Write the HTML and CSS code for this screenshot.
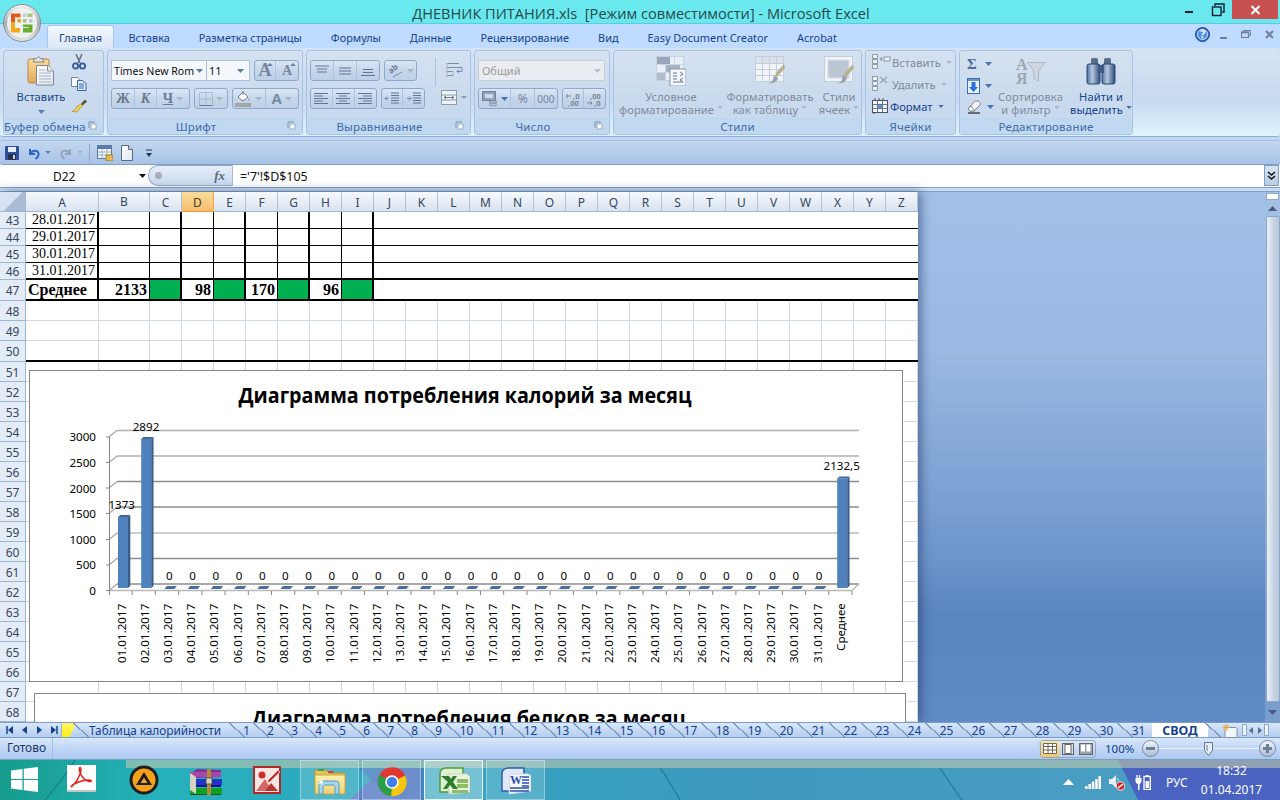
FILE: index.html
```html
<!DOCTYPE html>
<html lang="ru">
<head>
<meta charset="utf-8">
<title>ДНЕВНИК ПИТАНИЯ.xls - Microsoft Excel</title>
<link rel="stylesheet" href="styles.css">
</head>
<body>
<svg class="defs" width="0" height="0">
  <defs>
    <linearGradient id="orbRim" x1="0" y1="0" x2="0" y2="1"><stop offset="0" stop-color="#f4f4f4"/><stop offset=".5" stop-color="#a9aeb3"/><stop offset="1" stop-color="#e6e6e6"/></linearGradient>
    <linearGradient id="docFill" x1="0" y1="0" x2="1" y2="1"><stop offset="0" stop-color="#fff"/><stop offset="1" stop-color="#dfe6ee"/></linearGradient>
    <linearGradient id="clipFill" x1="0" y1="0" x2="0" y2="1"><stop offset="0" stop-color="#fbdc9c"/><stop offset="1" stop-color="#e3a95a"/></linearGradient>
    <linearGradient id="binFill" x1="0" y1="0" x2="1" y2="0"><stop offset="0" stop-color="#4e6f9d"/><stop offset=".4" stop-color="#b6c8de"/><stop offset="1" stop-color="#2d4d7c"/></linearGradient>
    <linearGradient id="folderFill" x1="0" y1="0" x2="0" y2="1"><stop offset="0" stop-color="#fff2b0"/><stop offset="1" stop-color="#f0cf70"/></linearGradient>
    <symbol id="z" viewBox="0 0 13 3" width="13" height="3"><polygon points="0,3 10,3 12.5,0 2.5,0" fill="#4a6e9e"/></symbol>
    <symbol id="caret" viewBox="0 0 7 4"><polygon points="0,0 7,0 3.5,4" fill="currentColor"/></symbol>
    <symbol id="launch" viewBox="0 0 9 9"><path d="M1 1h6M1 1v6" stroke="#7d93ad" fill="none"/><rect x="3" y="3" width="5" height="5" fill="#fff" stroke="#9aaabd"/></symbol>
    <symbol id="al-top" viewBox="0 0 16 12"><path d="M1 1.500h14M3 4.500h10M3 7.500h10" stroke="#5f7793" stroke-width="1.2"/></symbol>
    <symbol id="al-mid" viewBox="0 0 16 12"><path d="M2 3.500h12M2 6.500h12M2 9.500h12" stroke="#5f7793" stroke-width="1.2"/></symbol>
    <symbol id="al-bot" viewBox="0 0 16 12"><path d="M3 5h10M3 8h10M1 11h14" stroke="#5f7793" stroke-width="1.2"/></symbol>
    <symbol id="al-l" viewBox="0 0 16 12"><path d="M1 1h14M1 3.500h9M1 6h14M1 8.500h9M1 11h14" stroke="#5d7796" stroke-width="1.1"/></symbol>
    <symbol id="al-c" viewBox="0 0 16 12"><path d="M1 1h14M4 3.500h8M1 6h14M4 8.500h8M1 11h14" stroke="#5d7796" stroke-width="1.1"/></symbol>
    <symbol id="al-r" viewBox="0 0 16 12"><path d="M1 1h14M6 3.500h9M1 6h14M6 8.500h9M1 11h14" stroke="#5d7796" stroke-width="1.1"/></symbol>
    <symbol id="indl" viewBox="0 0 16 13"><path d="M7 1h8M7 3.500h8M7 6h8M7 8.500h8M7 11h8" stroke="#5d7796"/><path d="M5 6.500H1M3 4.500l-2 2 2 2" stroke="#6d8fb8" fill="none"/></symbol>
    <symbol id="indr" viewBox="0 0 16 13"><path d="M7 1h8M7 3.500h8M7 6h8M7 8.500h8M7 11h8" stroke="#5d7796"/><path d="M1 6.500h4M3 4.500l2 2-2 2" stroke="#6d8fb8" fill="none"/></symbol>
    <symbol id="cellins" viewBox="0 0 20 18"><path d="M1.500 1.500h5v4h-5zM1.500 6.500h5v4h-5zM1.500 11.500h5v4h-5z" fill="#eef3f9" stroke="#8d9aa9"/><path d="M9 6h3M9 6l2-2M9 6l2 2" stroke="#8a98a8" fill="none"/><rect x="13" y="4" width="6" height="4" fill="#eef3f9" stroke="#8d9aa9"/></symbol>
    <symbol id="celldel" viewBox="0 0 20 18"><path d="M1.500 1.500h5v4h-5zM1.500 6.500h5v4h-5zM1.500 11.500h5v4h-5z" fill="#eef3f9" stroke="#8d9aa9"/><path d="M9 2l7 6M16 2l-7 6" stroke="#9aa6b4" stroke-width="1.500"/></symbol>
  </defs>
</svg>

<div class="app">
  <header class="titlebar">
    <span class="title-text">ДНЕВНИК ПИТАНИЯ.xls&nbsp; [Режим совместимости] - Microsoft Excel</span>
    <div class="winctl">
      <span class="ctl-min"></span>
      <svg class="ctl-res" width="14" height="14" viewBox="0 0 14 14"><path d="M4 3V1h9v8h-2" fill="none" stroke="#123" stroke-width="1.400"/><rect x="1.500" y="4" width="8.500" height="8.500" fill="none" stroke="#123" stroke-width="1.400"/></svg>
      <span class="ctl-close"><svg width="11" height="10" viewBox="0 0 11 10"><path d="M1.500 1l8 8M9.500 1l-8 8" stroke="#fff" stroke-width="2"/></svg></span>
    </div>
  </header>

  <div class="orb">
    <svg width="38" height="38" viewBox="0 0 38 38">
      <circle cx="19" cy="19" r="18.500" fill="url(#orbRim)" stroke="#8a8f93"/>
      <circle cx="19" cy="19" r="15" fill="#eef0f1"/>
      <path d="M8 9.500h9.500v3.500H12v5.500H8z" fill="#dc5a1c"/>
      <path d="M8 18.500h4v5.500h5v4.500H9.500C8.500 28.500 8 28 8 27z" fill="#f2a91c"/>
      <path d="M12 13h5.500v1H12z" fill="#f0b48a"/>
      <rect x="20" y="9.500" width="3.500" height="3.500" fill="#c6c9cd"/><rect x="24.500" y="9.500" width="5" height="3.500" fill="#a4c77f"/>
      <rect x="14.500" y="15" width="3.500" height="3.500" fill="#e5a71f"/><rect x="20" y="15" width="3.500" height="3.500" fill="#a4c77f"/>
      <rect x="26" y="15" width="3.500" height="3.500" fill="#bfc3c7"/>
      <path d="M20 20.500h9.500V27c0 1-.5 1.500-1.500 1.500h-8V24h5.500v-1H20z" fill="#6dac33"/>
    </svg>
  </div>

  <nav class="tabs">
    <span class="tab active">Главная</span>
    <span class="tab">Вставка</span>
    <span class="tab">Разметка страницы</span>
    <span class="tab">Формулы</span>
    <span class="tab">Данные</span>
    <span class="tab">Рецензирование</span>
    <span class="tab">Вид</span>
    <span class="tab">Easy Document Creator</span>
    <span class="tab">Acrobat</span>
    <div class="mdi">
      <svg class="mdi-help" width="15" height="15" viewBox="0 0 15 15"><circle cx="7.500" cy="7.500" r="7" fill="#2f6fd0" stroke="#1d4c9c"/><circle cx="7.500" cy="7.500" r="5" fill="#4e8fe6" stroke="#dbe9ff"/><text class="qmark" x="7.500" y="11">?</text></svg>
      <span class="mdi-min"></span>
      <svg class="mdi-res" width="10" height="8" viewBox="0 0 10 8"><path d="M2.500 2V.5h7v5H8" fill="none" stroke="#6c7f96"/><rect x=".5" y="2" width="7" height="5.500" fill="none" stroke="#6c7f96" stroke-width="1.100"/><path d="M.5 2.500h7" stroke="#6c7f96" stroke-width="1.500"/></svg>
      <svg width="9" height="9" viewBox="0 0 9 9"><path d="M1 1l7 7M8 1L1 8" stroke="#6c7f96" stroke-width="2"/></svg>
    </div>
  </nav>

  <section class="ribbon">
    <div class="group g1">
      <div class="g-body">
        <div class="paste">
          <svg width="28" height="30" viewBox="0 0 28 30">
            <rect x="1" y="3" width="21" height="24" rx="2" fill="url(#clipFill)" stroke="#b08a50"/>
            <path d="M7 4V2.500h2.500L11.500 .5l2 2H16V4l1 2H6z" fill="#dfe3e8" stroke="#86817a"/>
            <path d="M9.500 9.500h11l6 5.500v14h-17z" fill="url(#docFill)" stroke="#7f8a96"/>
            <path d="M20.500 9.500v5.500h6" fill="#e8edf2" stroke="#7f8a96"/>
            <path d="M12 14h6M12 17h12M12 20h12M12 23h12M12 26h12" stroke="#a6b3c2"/>
          </svg>
          <span class="paste-label">Вставить</span>
          <svg class="caret-b"><use href="#caret"/></svg>
        </div>
        <div class="clip-tools">
          <svg width="14" height="16" viewBox="0 0 14 16"><path d="M4 0l4 9M10 0L6 9" stroke="#69737e" stroke-width="1.600"/><circle cx="3.500" cy="12" r="2.600" fill="none" stroke="#34579a" stroke-width="1.800"/><circle cx="10.500" cy="12" r="2.600" fill="none" stroke="#34579a" stroke-width="1.800"/></svg>
          <svg width="16" height="14" viewBox="0 0 16 14"><path d="M.5.5h6l2 2v7h-8z" fill="#fff" stroke="#6c87aa"/><path d="M6.500 3.500h5l3.500 3v7h-8.500z" fill="#dfeafa" stroke="#3a68ad"/><path d="M8 7h5M8 9h5M8 11h5" stroke="#3a68ad"/></svg>
          <svg width="17" height="15" viewBox="0 0 17 15"><path d="M10 6L14 1.500 16 3.500 11.500 7.500z" fill="#5a4a35"/><path d="M10 6l1.500 1.500L6 14 1 13.500c3-1 4-3 5-5z" fill="#f0cf55" stroke="#b08a30" stroke-width=".7"/></svg>
        </div>
      </div>
      <div class="g-label wl">Буфер обмена<svg class="launch"><use href="#launch"/></svg></div>
    </div>

    <div class="group g2">
      <div class="g-body tools">
        <div class="row">
          <div class="combo font-combo"><span>Times New Rom</span><svg class="caret-s"><use href="#caret"/></svg></div>
          <div class="combo size-combo"><span>11</span><svg class="caret-s"><use href="#caret"/></svg></div>
          <div class="bbox">
            <span class="b w22 letter big">A<i class="up"></i></span>
            <span class="b w22 letter small">A<i class="up"></i></span>
          </div>
        </div>
        <div class="row">
          <div class="bbox">
            <span class="b w23 glyph bold">Ж</span>
            <span class="b w23 glyph italic">К</span>
            <span class="b w32 glyph under">Ч<svg class="caret-g"><use href="#caret"/></svg></span>
          </div>
          <div class="bbox">
            <span class="b w33"><svg width="14" height="14" viewBox="0 0 14 14"><path d="M.5.5h13v13H.5zM7 .5v13M.5 7h13" fill="none" stroke="#8f9eb0" stroke-dasharray="1 1"/><path d="M.5 13.500h13" stroke="#6f7e90"/></svg><svg class="caret-g"><use href="#caret"/></svg></span>
          </div>
          <div class="bbox">
            <span class="b w33"><svg width="17" height="17" viewBox="0 0 17 17"><path d="M3 7l5-5 5 5-5 4z" fill="#fff" stroke="#6f8199"/><path d="M8 1v4" stroke="#6f8199"/><path d="M14 8c1 1.500 1.500 2.500 0 3-1-.5-1-1.500 0-3z" fill="#93a7bf"/><rect y="13" width="16" height="4" fill="#a5a5a5"/></svg><svg class="caret-g"><use href="#caret"/></svg></span>
            <span class="b w33 letter-a">A<svg class="caret-g"><use href="#caret"/></svg></span>
          </div>
        </div>
      </div>
      <div class="g-label wl">Шрифт<svg class="launch"><use href="#launch"/></svg></div>
    </div>

    <div class="group g3">
      <div class="g-body tools">
        <div class="row">
          <div class="bbox">
            <span class="b w23"><svg class="ic16"><use href="#al-top"/></svg></span>
            <span class="b w23"><svg class="ic16"><use href="#al-mid"/></svg></span>
            <span class="b w22"><svg class="ic16"><use href="#al-bot"/></svg></span>
          </div>
          <div class="bbox">
            <span class="b w31"><svg width="16" height="14" viewBox="0 0 16 14"><text class="orient" transform="translate(3 10) rotate(-40)">ab</text><path d="M5 13l9-5" stroke="#6d8fb8"/></svg><svg class="caret-g"><use href="#caret"/></svg></span>
          </div>
          <div class="vsep"></div>
          <svg class="wrap" width="17" height="16" viewBox="0 0 17 16"><path d="M1 1.500h12M1 5.500h15M1 9.500h6M1 13.500h6" stroke="#7a8da5"/><path d="M1 1v14M7 9v5" stroke="#a8b5c5"/><path d="M16 5.500v4h-5M13 7.500l-2 2 2 2" stroke="#6d8fb8" fill="none"/></svg>
        </div>
        <div class="row">
          <div class="bbox">
            <span class="b w23"><svg class="ic16"><use href="#al-l"/></svg></span>
            <span class="b w23"><svg class="ic16"><use href="#al-c"/></svg></span>
            <span class="b w22"><svg class="ic16"><use href="#al-r"/></svg></span>
          </div>
          <div class="bbox">
            <span class="b w22"><svg class="ic16"><use href="#indl"/></svg></span>
            <span class="b w22"><svg class="ic16"><use href="#indr"/></svg></span>
          </div>
          <svg class="merge" width="26" height="16" viewBox="0 0 26 16"><rect x=".5" y=".5" width="15" height="14" fill="#eef3f9" stroke="#8d9aa9"/><path d="M1 5h14M1 10h14" stroke="#8d9aa9"/><path d="M3 7.500h10M5 6l-2 1.500L5 9M11 6l2 1.500L11 9" stroke="#6d7f95" fill="none"/><polygon points="20,6 26,6 23,9" fill="#8a9bb0"/></svg>
        </div>
      </div>
      <div class="g-label wl">Выравнивание<svg class="launch"><use href="#launch"/></svg></div>
    </div>

    <div class="group g4">
      <div class="g-body tools">
        <div class="row">
          <div class="combo num-combo"><span>Общий</span><svg class="caret-s"><use href="#caret"/></svg></div>
        </div>
        <div class="row">
          <div class="bbox">
            <span class="b w33"><svg width="16" height="16" viewBox="0 0 16 16"><rect x=".5" y=".5" width="13" height="9" fill="#8fa3bd" stroke="#6f8199"/><rect x="3" y="3" width="8" height="4" fill="#cdd9e8"/><ellipse cx="11" cy="11" rx="4" ry="1.300" fill="#b4c2d4" stroke="#6f8199" stroke-width=".6"/><ellipse cx="11" cy="13.500" rx="4" ry="1.300" fill="#b4c2d4" stroke="#6f8199" stroke-width=".6"/></svg><svg class="caret-g blue"><use href="#caret"/></svg></span>
            <span class="b w24 pct">%</span>
            <span class="b w22 thou">000</span>
          </div>
          <div class="bbox">
            <span class="b w22"><svg width="17" height="16" viewBox="0 0 17 16"><text class="dec" x="8" y="8">,0</text><text class="dec" x="3" y="15">,00</text><path d="M1 5h5M3 3L1 5l2 2" stroke="#7b8ea6" fill="none"/></svg></span>
            <span class="b w21"><svg width="17" height="16" viewBox="0 0 17 16"><text class="dec" x="4" y="8">,00</text><text class="dec" x="8" y="15">,0</text><path d="M1 12h5M4 10l2 2-2 2" stroke="#7b8ea6" fill="none"/></svg></span>
          </div>
        </div>
      </div>
      <div class="g-label wl">Число<svg class="launch"><use href="#launch"/></svg></div>
    </div>

    <div class="group g5">
      <div class="g-body g5-body">
        <div class="lg lg-cond">
          <svg width="30" height="30" viewBox="0 0 30 30"><g fill="#e9eff7" stroke="#c8d2de"><rect x=".5" y=".5" width="27" height="24"/></g><path d="M.5 8.500h27M.5 16.500h27M9.500.5v24M18.500.5v24" stroke="#cdd7e3"/><rect x="1" y="1" width="13" height="7" fill="#97a6b8"/><rect x="10" y="9" width="14" height="7" fill="#a4b2c3"/><rect x="1" y="17" width="8" height="7" fill="#aebccc"/><rect x="14" y="13" width="16" height="17" fill="#f5f7fa" stroke="#8a99ab"/><path d="M17 17h4M17 20h4M17 23h4M17 26h10M24 16l3 2-3 2M27 22l-3 2 3 2" stroke="#5b7698" fill="none"/></svg>
          <span>Условное</span>
          <span>форматирование<svg class="caret-t"><use href="#caret"/></svg></span>
        </div>
        <div class="lg lg-table">
          <svg width="30" height="30" viewBox="0 0 30 30"><rect x=".5" y=".5" width="28" height="25" fill="#f0f3f7" stroke="#c5cfdb"/><rect x="1" y="1" width="27" height="6" fill="#dbe1e8"/><path d="M.5 7.500h28M.5 13.500h28M.5 19.500h28M7.500.5v25M14.500.5v25M21.500.5v25" stroke="#c3ced9"/><path d="M29 8L20 18l2 3 8-9z" fill="#b7b08e"/><path d="M13 27c4 0 5-2 6-8l4 3c-1 4-5 6-10 5z" fill="#9aa3ad"/></svg>
          <span>Форматировать</span>
          <span>как таблицу<svg class="caret-t"><use href="#caret"/></svg></span>
        </div>
        <div class="lg lg-style">
          <svg width="30" height="30" viewBox="0 0 30 30"><rect x=".5" y=".5" width="28" height="25" fill="#f0f3f7" stroke="#c5cfdb"/><rect x="4" y="4" width="21" height="18" fill="#bcc6d2" stroke="#d8dfe7"/><path d="M29 8L20 18l2 3 8-9z" fill="#b7b08e"/><path d="M13 27c4 0 5-2 6-8l4 3c-1 4-5 6-10 5z" fill="#9aa3ad"/></svg>
          <span>Стили</span>
          <span>ячеек<svg class="caret-t"><use href="#caret"/></svg></span>
        </div>
      </div>
      <div class="g-label active-label">Стили</div>
    </div>

    <div class="group g6">
      <div class="g-body g6-body">
        <div class="cellrow off"><svg class="ic20"><use href="#cellins"/></svg>Вставить<svg class="caret-t"><use href="#caret"/></svg></div>
        <div class="cellrow off"><svg class="ic20"><use href="#celldel"/></svg>Удалить<svg class="caret-t"><use href="#caret"/></svg></div>
        <div class="cellrow"><svg width="18" height="16" viewBox="0 0 18 16"><rect x="1.500" y="2.500" width="15" height="12" fill="#f4f6f9" stroke="#44505f"/><path d="M1.500 6.500h15M1.500 10.500h15M6.500 2.500v12M11.500 2.500v12" stroke="#6a7787"/><rect x="7" y="7" width="4" height="3" fill="#5a8ee0"/><path d="M4 0v2M8 0v2M12 0v2M3 15v1" stroke="#44505f"/></svg>Формат<svg class="caret-t blue"><use href="#caret"/></svg></div>
      </div>
      <div class="g-label active-label">Ячейки</div>
    </div>

    <div class="group g7">
      <div class="g-body g7-body">
        <div class="edit-col">
          <div class="edit-i"><span class="sigma">Σ</span><svg class="caret-g blue"><use href="#caret"/></svg></div>
          <div class="edit-i"><svg width="13" height="16" viewBox="0 0 13 16"><rect x=".5" y=".5" width="12" height="15" fill="#e8f0fb" stroke="#3d6cb0"/><rect x="1" y="1" width="11" height="2" fill="#6d93c9"/><path d="M4.500 4h4v5H11l-4.500 5L2 9h2.500z" fill="#2f6fd8"/></svg><svg class="caret-g blue"><use href="#caret"/></svg></div>
          <div class="edit-i"><svg width="15" height="14" viewBox="0 0 15 14"><path d="M1 9l6-7c1-1 2-1 4-1 2 1 3 2 2 4l-6 6H3z" fill="#f3f3f6" stroke="#7a8594"/><path d="M1 9l3-3 4 5H3z" fill="#fff" stroke="#7a8594"/><path d="M1 13h12" stroke="#222" stroke-width="1.200"/></svg><svg class="caret-g blue"><use href="#caret"/></svg></div>
        </div>
        <div class="lg lg-sort">
          <svg width="30" height="30" viewBox="0 0 32 30"><text class="sort-a" x="0" y="14">А</text><text class="sort-a" x="0" y="29">Я</text><path d="M12 6h19l-7 9v11l-5-3v-8z" fill="#d0d6dd" stroke="#aeb6c0"/></svg>
          <span>Сортировка</span>
          <span>и фильтр<svg class="caret-t"><use href="#caret"/></svg></span>
        </div>
        <div class="lg lg-find on">
          <svg width="30" height="30" viewBox="0 0 30 30"><rect x="5" y="2" width="7" height="7" rx="1.500" fill="#5a6f8a"/><rect x="18" y="2" width="7" height="7" rx="1.500" fill="#5a6f8a"/><rect x="1" y="8" width="13" height="20" rx="2" fill="url(#binFill)" stroke="#2b4670"/><rect x="16" y="8" width="13" height="20" rx="2" fill="url(#binFill)" stroke="#2b4670"/><rect x="12" y="9" width="6" height="8" fill="#3f5b84"/></svg>
          <span>Найти и</span>
          <span>выделить<svg class="caret-t blue"><use href="#caret"/></svg></span>
        </div>
      </div>
      <div class="g-label active-label">Редактирование</div>
    </div>
  </section>

  <div class="strip"></div>

  <div class="qat">
    <svg width="14" height="14" viewBox="0 0 14 14"><rect width="14" height="14" rx="1" fill="#2f4f9a"/><rect x="3" y="1" width="8" height="5" fill="#e8eef8"/><rect x="3" y="8" width="8" height="6" fill="#25314f"/><rect x="8" y="9" width="2" height="4" fill="#cbd4e4"/></svg>
    <svg class="q-undo" width="14" height="14" viewBox="0 0 14 14"><path d="M3 3v5h5" fill="none" stroke="#2f67c4" stroke-width="2"/><path d="M3.500 8c2-5 9-4 8 1-.4 2-1.500 3-3 4" fill="none" stroke="#2f67c4" stroke-width="2"/></svg>
    <svg class="caret-q"><use href="#caret"/></svg>
    <svg class="q-redo" width="14" height="14" viewBox="0 0 14 14"><path d="M11 3v5H6" fill="none" stroke="#93a5bd" stroke-width="2"/><path d="M10.500 8c-2-5-9-4-8 1 .4 2 1.500 3 3 4" fill="none" stroke="#93a5bd" stroke-width="2"/></svg>
    <svg class="caret-q gray"><use href="#caret"/></svg>
    <span class="q-sep"></span>
    <svg width="16" height="16" viewBox="0 0 16 16"><rect x=".5" y=".5" width="14" height="13" fill="#f4f7fb" stroke="#5c7aa3"/><rect x="1" y="1" width="13" height="3" fill="#5c7aa3"/><path d="M1 7h13M1 10h13M5 4v9M10 4v9" stroke="#9ab0cc"/><rect x="9" y="10" width="7" height="6" fill="#e8b94f" stroke="#a57e26"/></svg>
    <svg width="14" height="16" viewBox="0 0 14 16"><path d="M1.500.5h7l4 4v11h-11z" fill="url(#docFill)" stroke="#5b6b7e"/><path d="M8.500.5v4h4" fill="#cfd8e2" stroke="#5b6b7e"/></svg>
    <svg class="q-more" width="8" height="8" viewBox="0 0 8 8"><path d="M1 1h6" stroke="#1e395b"/><polygon points="1,4 7,4 4,8" fill="#1e395b"/></svg>
  </div>

  <div class="fbar">
    <div class="namebox"><span>D22</span><svg class="caret-n"><use href="#caret"/></svg></div>
    <div class="fx-pill"><i class="knob"></i><span class="fx">fx</span></div>
    <div class="fvalue">='7'!$D$105</div>
    <div class="fexpand"><svg width="9" height="10" viewBox="0 0 9 10"><path d="M1 1l3.500 3L8 1M1 5l3.500 3L8 5" fill="none" stroke="#111" stroke-width="1.500"/></svg></div>
  </div>
  <div class="band"></div>

  <main class="workspace">
    <div class="sheet">
      <div class="colhead">
        <span class="corner"></span>
        <span class="ch a">A</span><span class="ch b">B</span><span class="ch">C</span><span class="ch sel">D</span><span class="ch">E</span><span class="ch">F</span><span class="ch">G</span><span class="ch">H</span><span class="ch">I</span><span class="ch">J</span><span class="ch">K</span><span class="ch">L</span><span class="ch">M</span><span class="ch">N</span><span class="ch">O</span><span class="ch">P</span><span class="ch">Q</span><span class="ch">R</span><span class="ch">S</span><span class="ch">T</span><span class="ch">U</span><span class="ch">V</span><span class="ch">W</span><span class="ch">X</span><span class="ch">Y</span><span class="ch">Z</span>
      </div>
      <div class="sheet-body">
        <div class="rowhead">
          <span class="rh h17">43</span><span class="rh h17">44</span><span class="rh h17">45</span><span class="rh h17">46</span><span class="rh h21">47</span><span class="rh">48</span><span class="rh">49</span><span class="rh h21">50</span><span class="rh">51</span><span class="rh">52</span><span class="rh">53</span><span class="rh">54</span><span class="rh">55</span><span class="rh">56</span><span class="rh">57</span><span class="rh">58</span><span class="rh">59</span><span class="rh">60</span><span class="rh">61</span><span class="rh">62</span><span class="rh">63</span><span class="rh">64</span><span class="rh">65</span><span class="rh">66</span><span class="rh">67</span><span class="rh">68</span>
        </div>
        <div class="cells">
          <div class="trow"><span class="c date">28.01.2017</span><span class="c"></span><span class="c tk"></span><span class="c"></span><span class="c tk"></span><span class="c"></span><span class="c tk"></span><span class="c"></span><span class="c tk"></span><span class="c rest"></span></div>
          <div class="trow"><span class="c date">29.01.2017</span><span class="c"></span><span class="c tk"></span><span class="c"></span><span class="c tk"></span><span class="c"></span><span class="c tk"></span><span class="c"></span><span class="c tk"></span><span class="c rest"></span></div>
          <div class="trow"><span class="c date">30.01.2017</span><span class="c"></span><span class="c tk"></span><span class="c"></span><span class="c tk"></span><span class="c"></span><span class="c tk"></span><span class="c"></span><span class="c tk"></span><span class="c rest"></span></div>
          <div class="trow thickb"><span class="c date">31.01.2017</span><span class="c"></span><span class="c tk"></span><span class="c"></span><span class="c tk"></span><span class="c"></span><span class="c tk"></span><span class="c"></span><span class="c tk"></span><span class="c rest"></span></div>
          <div class="trow total"><span class="c lbl">Среднее</span><span class="c num">2133</span><span class="c tk green"></span><span class="c num">98</span><span class="c tk green"></span><span class="c num">170</span><span class="c tk green"></span><span class="c num">96</span><span class="c tk green"></span><span class="c rest"></span></div>
          <div class="gridbg blank"></div>
          <div class="divider"></div>
          <div class="gridbg below">
            <figure class="chart chart1">
              <svg width="872" height="310" viewBox="30 371 872 310">
                <text class="c-title" x="465" y="403" text-anchor="middle" textLength="453" lengthAdjust="spacingAndGlyphs">Диаграмма потребления калорий за месяц</text>
                <g fill="none" stroke-width="1.300">
                  <path d="M117 430.500H859M117 456H859" stroke="#b0b0b0"/>
                  <path d="M117 481.500H859" stroke="#8c8c8c"/>
                  <path d="M117 507H859" stroke="#8c8c8c"/>
                  <path d="M117 533H859" stroke="#bdbdbd"/>
                  <path d="M117 558.500H859" stroke="#8c8c8c"/>
                  <path d="M117 584H859" stroke="#8c8c8c"/>
                  <path d="M109 437l8-6.500M109 462.500l8-6.500M109 488l8-6.500M109 513.500l8-6.500M109 539.500l8-6.500M109 565l8-6.500M109 590.500l8-6.500" stroke="#a8a8a8"/>
                  <path d="M109 590.500H852L859 584" stroke="#b8b8b8"/>
                </g>
                <path d="M109.500 437V591M106 437h3.500M106 462.500h3.500M106 488h3.500M106 513.500h3.500M106 539.500h3.500M106 565h3.500M106 590.500h3.500" fill="none" stroke="#868686"/>
                <path fill="none" stroke="#868686" d="M109.500 591v4M132.200 591v4M155.400 591v4M178.700 591v4M201.900 591v4M225.100 591v4M248.300 591v4M271.500 591v4M294.800 591v4M318 591v4M341.200 591v4M364.400 591v4M387.600 591v4M410.900 591v4M434.100 591v4M457.300 591v4M480.500 591v4M503.700 591v4M527 591v4M550.200 591v4M573.400 591v4M596.600 591v4M619.800 591v4M643.100 591v4M666.300 591v4M689.500 591v4M712.700 591v4M735.900 591v4M759.200 591v4M782.400 591v4M805.600 591v4M828.800 591v4M852 591v4"/>
                <g class="c-ytick" text-anchor="end">
                  <text x="96" y="441">3000</text><text x="96" y="467">2500</text><text x="96" y="492.500">2000</text><text x="96" y="518">1500</text><text x="96" y="543.500">1000</text><text x="96" y="569">500</text><text x="96" y="595">0</text>
                </g>
                <g>
                  <rect class="bf" x="118" y="517" width="10" height="71"/><polygon class="bs" points="128,517 130.300,515 130.300,586 128,588"/><polygon class="bt" points="118,517 128,517 130.300,515 120.300,515"/>
                  <rect class="bf" x="141.200" y="439" width="10" height="149"/><polygon class="bs" points="151.200,439 153.500,437 153.500,586 151.200,588"/><polygon class="bt" points="141.200,439 151.200,439 153.500,437 143.500,437"/>
                  <rect class="bf" x="837.200" y="478.500" width="10" height="109.500"/><polygon class="bs" points="847.200,478.500 849.500,476.500 849.500,586 847.200,588"/><polygon class="bt" points="837.200,478.500 847.200,478.500 849.500,476.500 839.500,476.500"/>
                </g>
                <g>
                  <use href="#z" x="164.400" y="586"/><use href="#z" x="187.600" y="586"/><use href="#z" x="210.800" y="586"/><use href="#z" x="234" y="586"/><use href="#z" x="257.200" y="586"/><use href="#z" x="280.400" y="586"/><use href="#z" x="303.600" y="586"/><use href="#z" x="326.800" y="586"/><use href="#z" x="350" y="586"/><use href="#z" x="373.200" y="586"/><use href="#z" x="396.400" y="586"/><use href="#z" x="419.600" y="586"/><use href="#z" x="442.800" y="586"/><use href="#z" x="466" y="586"/><use href="#z" x="489.200" y="586"/><use href="#z" x="512.400" y="586"/><use href="#z" x="535.600" y="586"/><use href="#z" x="558.800" y="586"/><use href="#z" x="582" y="586"/><use href="#z" x="605.200" y="586"/><use href="#z" x="628.400" y="586"/><use href="#z" x="651.600" y="586"/><use href="#z" x="674.800" y="586"/><use href="#z" x="698" y="586"/><use href="#z" x="721.200" y="586"/><use href="#z" x="744.400" y="586"/><use href="#z" x="767.600" y="586"/><use href="#z" x="790.800" y="586"/><use href="#z" x="814" y="586"/>
                </g>
                <g class="c-data" text-anchor="middle">
                  <text x="121.700" y="509">1373</text><text x="146" y="431">2892</text><text x="841.700" y="470">2132,5</text>
                  <text x="169.400" y="580">0</text><text x="192.600" y="580">0</text><text x="215.800" y="580">0</text><text x="239" y="580">0</text><text x="262.200" y="580">0</text><text x="285.400" y="580">0</text><text x="308.600" y="580">0</text><text x="331.800" y="580">0</text><text x="355" y="580">0</text><text x="378.200" y="580">0</text><text x="401.400" y="580">0</text><text x="424.600" y="580">0</text><text x="447.800" y="580">0</text><text x="471" y="580">0</text><text x="494.200" y="580">0</text><text x="517.400" y="580">0</text><text x="540.600" y="580">0</text><text x="563.800" y="580">0</text><text x="587" y="580">0</text><text x="610.200" y="580">0</text><text x="633.400" y="580">0</text><text x="656.600" y="580">0</text><text x="679.800" y="580">0</text><text x="703" y="580">0</text><text x="726.200" y="580">0</text><text x="749.400" y="580">0</text><text x="772.600" y="580">0</text><text x="795.800" y="580">0</text><text x="819" y="580">0</text>
                </g>
                <g class="c-xtick">
                  <text transform="translate(125.500 663) rotate(-90)">01.01.2017</text>
                  <text transform="translate(148.700 663) rotate(-90)">02.01.2017</text>
                  <text transform="translate(171.900 663) rotate(-90)">03.01.2017</text>
                  <text transform="translate(195.100 663) rotate(-90)">04.01.2017</text>
                  <text transform="translate(218.300 663) rotate(-90)">05.01.2017</text>
                  <text transform="translate(241.500 663) rotate(-90)">06.01.2017</text>
                  <text transform="translate(264.700 663) rotate(-90)">07.01.2017</text>
                  <text transform="translate(287.900 663) rotate(-90)">08.01.2017</text>
                  <text transform="translate(311.100 663) rotate(-90)">09.01.2017</text>
                  <text transform="translate(334.300 663) rotate(-90)">10.01.2017</text>
                  <text transform="translate(357.500 663) rotate(-90)">11.01.2017</text>
                  <text transform="translate(380.700 663) rotate(-90)">12.01.2017</text>
                  <text transform="translate(403.900 663) rotate(-90)">13.01.2017</text>
                  <text transform="translate(427.100 663) rotate(-90)">14.01.2017</text>
                  <text transform="translate(450.300 663) rotate(-90)">15.01.2017</text>
                  <text transform="translate(473.500 663) rotate(-90)">16.01.2017</text>
                  <text transform="translate(496.700 663) rotate(-90)">17.01.2017</text>
                  <text transform="translate(519.900 663) rotate(-90)">18.01.2017</text>
                  <text transform="translate(543.100 663) rotate(-90)">19.01.2017</text>
                  <text transform="translate(566.300 663) rotate(-90)">20.01.2017</text>
                  <text transform="translate(589.500 663) rotate(-90)">21.01.2017</text>
                  <text transform="translate(612.700 663) rotate(-90)">22.01.2017</text>
                  <text transform="translate(635.900 663) rotate(-90)">23.01.2017</text>
                  <text transform="translate(659.100 663) rotate(-90)">24.01.2017</text>
                  <text transform="translate(682.300 663) rotate(-90)">25.01.2017</text>
                  <text transform="translate(705.500 663) rotate(-90)">26.01.2017</text>
                  <text transform="translate(728.700 663) rotate(-90)">27.01.2017</text>
                  <text transform="translate(751.900 663) rotate(-90)">28.01.2017</text>
                  <text transform="translate(775.100 663) rotate(-90)">29.01.2017</text>
                  <text transform="translate(798.300 663) rotate(-90)">30.01.2017</text>
                  <text transform="translate(821.500 663) rotate(-90)">31.01.2017</text>
                  <text transform="translate(844.700 651) rotate(-90)">Среднее</text>
                </g>
              </svg>
            </figure>
            <figure class="chart chart2">
              <svg width="870" height="60" viewBox="35 694 870 60">
                <text class="c-title" x="469" y="726" text-anchor="middle" textLength="434" lengthAdjust="spacingAndGlyphs">Диаграмма потребления белков за месяц</text>
              </svg>
            </figure>
          </div>
        </div>
      </div>
    </div>
    <div class="vscroll">
      <span class="vs-split"></span>
      <svg class="vs-arrow" width="9" height="5" viewBox="0 0 9 5"><polygon points="0,5 9,5 4.500,0" fill="#4a5a80"/></svg>
      <span class="vs-thumb"></span>
      <svg class="vs-arrow dn" width="9" height="5" viewBox="0 0 9 5"><polygon points="0,0 9,0 4.500,5" fill="#4a5a80"/></svg>
    </div>
  </main>

  <div class="sheettabs">
    <div class="navbtns">
      <svg width="8" height="8" viewBox="0 0 8 8"><path d="M1 0v8" stroke="#15428b" stroke-width="1.500"/><polygon points="7,0 7,8 2,4" fill="#15428b"/></svg>
      <svg width="6" height="8" viewBox="0 0 6 8"><polygon points="5,0 5,8 0,4" fill="#15428b"/></svg>
      <svg width="6" height="8" viewBox="0 0 6 8"><polygon points="1,0 1,8 6,4" fill="#15428b"/></svg>
      <svg width="8" height="8" viewBox="0 0 8 8"><path d="M7 0v8" stroke="#15428b" stroke-width="1.500"/><polygon points="1,0 1,8 6,4" fill="#15428b"/></svg>
    </div>
    <span class="st yellow"></span>
    <span class="st wide">Таблица калорийности</span>
    <span class="st s">1</span><span class="st s">2</span><span class="st s">3</span><span class="st s">4</span><span class="st s">5</span><span class="st s">6</span><span class="st s">7</span><span class="st s">8</span><span class="st s">9</span>
    <span class="st">10</span><span class="st">11</span><span class="st">12</span><span class="st">13</span><span class="st">14</span><span class="st">15</span><span class="st">16</span><span class="st">17</span><span class="st">18</span><span class="st">19</span><span class="st">20</span><span class="st">21</span><span class="st">22</span><span class="st">23</span><span class="st">24</span><span class="st">25</span><span class="st">26</span><span class="st">27</span><span class="st">28</span><span class="st">29</span><span class="st">30</span><span class="st">31</span>
    <span class="st current">СВОД</span>
    <span class="st newtab"><svg width="16" height="14" viewBox="0 0 16 14"><path d="M5 3.500h9l1 1v8l-1 1H4l-1-1V6" fill="#f3f7fc" stroke="#7f93ad"/><path d="M4 0v7M.5 3.500h7M1.500 1l5 5M6.500 1l-5 5" stroke="#e7a52f"/></svg></span>
    <div class="hsplit">
      <i class="hs-bar"></i>
      <svg width="13" height="7" viewBox="0 0 13 7"><polygon points="4,0 4,7 0,3.500" fill="#5b6f8c"/><polygon points="9,0 9,7 13,3.500" fill="#5b6f8c"/></svg>
      <i class="hs-bar"></i>
    </div>
  </div>

  <footer class="status">
    <span class="ready">Готово</span>
    <div class="views">
      <span class="view on"><svg width="14" height="11" viewBox="0 0 14 11"><path d="M.5.5h13v10H.5zM.5 3.500h13M.5 7h13M5 .5v10M9.500.5v10" fill="#fff" stroke="#6d6a5a"/></svg></span>
      <span class="view"><svg width="12" height="12" viewBox="0 0 12 12"><rect x=".5" y=".5" width="11" height="11" fill="#d8dde4" stroke="#666"/><rect x="3" y="1.500" width="6" height="9" fill="#fff" stroke="#666"/></svg></span>
      <span class="view"><svg width="14" height="12" viewBox="0 0 14 12"><rect x=".5" y=".5" width="13" height="11" fill="#9aa2ad" stroke="#666"/><rect x="2" y="1.500" width="4" height="7" fill="#fff"/><rect x="7.500" y="1.500" width="4" height="7" fill="#fff"/></svg></span>
    </div>
    <span class="zoompct">100%</span>
    <span class="zbtn"><i class="minus"></i></span>
    <div class="zslider">
      <svg class="zthumb" width="9" height="14" viewBox="0 0 9 14"><path d="M.5.5h8v8l-4 5-4-5z" fill="#e6eef8" stroke="#5f7799"/><path d="M3 3v6" stroke="#5f7799"/></svg>
    </div>
    <span class="zbtn"><i class="minus"></i><i class="plus"></i></span>
  </footer>

  <div class="taskbar">
    <svg class="wall" width="1280" height="40" viewBox="0 0 1280 40">
      <defs><linearGradient id="wallG" x1="0" y1="0" x2="1" y2="0"><stop offset="0" stop-color="#169c8c"/><stop offset=".12" stop-color="#25b1bb"/><stop offset=".3" stop-color="#32a6c0"/><stop offset=".6" stop-color="#3f99be"/><stop offset="1" stop-color="#4e9fc4"/></linearGradient></defs>
      <rect width="1280" height="40" fill="url(#wallG)"/>
      <polygon points="1118,0 1280,0 1280,40 1138,40" fill="#4a62c0"/>
      <polygon points="350,40 372,18 400,8 420,8 420,40" fill="#5b80c6"/>
      <polygon points="358,8 424,8 424,40 395,40" fill="#4f75c0" opacity=".7"/>
      <path d="M75 0c-8 14-20 28-30 40M940 8c8 12 14 22 22 32M660 8c8 10 14 22 20 32" fill="none" stroke="#136f8a" stroke-opacity=".6" stroke-width="1.500"/>
      <rect x="126" width="1154" height="8" fill="#b9c6ae" fill-opacity=".62"/>
    </svg>
    <svg class="win-logo" width="27" height="25" viewBox="0 0 27 25"><polygon points="0,3.500 11.500,2 11.500,12 0,12" fill="#fff"/><polygon points="12.800,1.800 27,0 27,12 12.800,12" fill="#fff"/><polygon points="0,13 11.500,13 11.500,23 0,21.500" fill="#fff"/><polygon points="12.800,13 27,13 27,25 12.800,23.200" fill="#fff"/></svg>
    <svg class="tb-pdf" width="29" height="27" viewBox="0 0 29 27"><rect width="29" height="27" fill="#fdfdfd"/><rect y="25" width="29" height="2" fill="#c5c5c5"/><path d="M5 21c3-2 6-7 8-12 1-3 1-6 .3-6.500-1-.5-1.500 2-.3 5 1.500 4 5 8 9 9 3 .5 3-1.500 0-1.500-5 0-11 2-15 4-3 1.500-3 3.500-2 2.500z" fill="none" stroke="#e2231a" stroke-width="1.500"/></svg>
    <svg class="tb-aimp" width="30" height="30" viewBox="0 0 30 30"><circle cx="15" cy="15" r="14.500" fill="#1e1e22"/><circle cx="15" cy="15" r="11.500" fill="#f5a21a"/><polygon points="15,7 23,20 7,20 15,7" fill="#1e1e22"/><polygon points="15,12.500 18.500,18 11.500,18" fill="#f5a21a"/></svg>
    <svg class="tb-rar" width="33" height="26" viewBox="0 0 33 26"><polygon points="1,5 8,0 32,1 32,8 8,9 1,9" fill="#8b2b92"/><rect x="1" y="3" width="31" height="5" fill="#a648a8"/><rect x="1" y="10" width="32" height="6" fill="#2133c9"/><rect x="1" y="16" width="31" height="2" fill="#11197a"/><rect x="1" y="19" width="32" height="6" fill="#0fa024"/><rect x="1" y="25" width="31" height="1" fill="#06520f"/><path d="M1 4l6 4v17l-6-4z" fill="#d8d3c0"/><rect x="18" y="0" width="4" height="26" fill="#b58a3a"/><rect x="17" y="9" width="6" height="6" fill="#d9d3c2" stroke="#444" stroke-width=".8"/></svg>
    <svg class="tb-paint" width="28" height="28" viewBox="0 0 28 28"><rect width="28" height="28" fill="#b0282a"/><rect x="2" y="2" width="24" height="24" fill="#f4e7e3"/><circle cx="9" cy="9" r="3.500" fill="#c92d2d"/><polygon points="3,25 12,13 19,25" fill="#d66666"/><polygon points="12,25 18,17 25,25" fill="#ba3333"/><path d="M15 14L25 4l2 2-10 10-3 1z" fill="#c93232" stroke="#fff" stroke-width=".6"/></svg>
    <span class="tb-btn first"><svg width="32" height="28" viewBox="0 0 32 28"><path d="M1 3h11l3 3h16v12H1z" fill="#e8c354" stroke="#b5953a"/><rect x="4" y="2" width="6" height="2" fill="#3fa24a"/><rect x="14" y="4" width="6" height="2" fill="#d0453a"/><rect x="1" y="8" width="30" height="19" rx="1" fill="url(#folderFill)" stroke="#c9a747"/><path d="M5 27V17c0-2 1-3 3-3h14c2 0 3 1 3 3v10h-4v-7c0-1-1-2-2-2H11c-1 0-2 1-2 2v7z" fill="#a8d6ec" stroke="#4a9cc4"/><path d="M5 13l4 4M9 13l-4 4" stroke="#fff" stroke-width="1.200"/></svg></span>
    <span class="tb-btn"><svg width="30" height="30" viewBox="0 0 30 30"><circle cx="15" cy="15" r="14" fill="#e0382e"/><path d="M15 15L28 8.500A14 14 0 0 1 14 29z" fill="#f6c60e"/><path d="M15 15L14 29A14 14 0 0 1 2.800 8z" fill="#27a148"/><path d="M2.800 8A14 14 0 0 1 28 8.500H15z" fill="#e0382e"/><circle cx="15" cy="15" r="6.800" fill="#fff"/><circle cx="15" cy="15" r="5.200" fill="#3f80e8"/></svg></span>
    <span class="tb-btn active"><svg width="32" height="28" viewBox="0 0 32 28"><path d="M2 25V6c0-3 3-5 6-5h17v24z" fill="#dff0d2" stroke="#4e9c3a" stroke-width="1.500"/><path d="M10 7h19l3 3v15l-21 2z" fill="#e8f2df" stroke="#c7d6bd"/><path d="M3 9h8l2 3 2-3h4l-4 6 5 7h-5l-3-4-3 4H5l5-7z" fill="#2f7d2a"/><path d="M19 12h11v4H19zM19 17h11v4H19zM14 23h16v3H14z" fill="#8dbd68"/></svg></span>
    <span class="tb-btn"><svg width="30" height="28" viewBox="0 0 30 28"><path d="M1 24V6c0-3 3-5 6-5h16v23z" fill="#dfe8f8" stroke="#2f5cad" stroke-width="1.500"/><path d="M9 7h18l3 2v15l-22 3z" fill="#f4f7fc" stroke="#cdd8ea"/><text class="word-w" x="9" y="17">W</text><path d="M21 10h7M21 13h7M21 16h7M21 19h7M9 21h19M9 24h19" stroke="#2b4fa6" stroke-width="1.500"/></svg></span>
    <div class="tray">
      <svg class="t-up" width="11" height="6" viewBox="0 0 11 6"><polygon points="0,6 11,6 5.500,0" fill="#fff"/></svg>
      <svg class="t-net" width="16" height="13" viewBox="0 0 16 13"><rect y="10" width="2.500" height="3" fill="#fff"/><rect x="3.400" y="8" width="2.500" height="5" fill="#fff"/><rect x="6.800" y="5.500" width="2.500" height="7.500" fill="#fff"/><rect x="10.200" y="3" width="2.500" height="10" fill="#fff"/><rect x="13.500" y="0" width="2.500" height="13" fill="#fff"/></svg>
      <svg class="t-vol" width="16" height="17" viewBox="0 0 16 17"><path d="M0 5h3l4-4v13L3 10H0z" fill="#e8eef5"/><path d="M8 4c1 1 1.500 2 1.500 3" stroke="#e8eef5" fill="none"/><circle cx="11.500" cy="12" r="4.500" fill="#fff"/><circle cx="11.500" cy="12" r="3.800" fill="#d81e1e"/><path d="M9 13.800l5-3.600" stroke="#fff" stroke-width="1.600"/></svg>
      <svg class="t-pow" width="16" height="15" viewBox="0 0 16 15"><path d="M2 0v3M4.500 0v3" stroke="#fff" stroke-width="1.300"/><path d="M.5 3h6v3c0 2-1.500 3-2 3v6H3V9C2 9 .5 8 .5 6z" fill="#fff"/><rect x="9" y="1.500" width="6.300" height="13" fill="none" stroke="#fff" stroke-width="1.300"/><rect x="10.800" y="0" width="2.700" height="1.500" fill="#fff"/><rect x="10.500" y="6" width="3.400" height="7" fill="#fff"/></svg>
      <span class="t-lang">РУС</span>
      <div class="clock"><span>18:32</span><span>01.04.2017</span></div>
    </div>
  </div>
</div>
</body>
</html>
```
FILE: styles.css
```css
* { box-sizing: border-box; }
html, body { margin: 0; padding: 0; }
body { width: 1280px; height: 800px; overflow: hidden; font-family: "Noto Sans", sans-serif; font-size: 11px; color: #15428b; }
.defs { position: absolute; }
svg { display: block; flex: none; }
.app { position: relative; width: 1280px; height: 800px; display: flex; flex-direction: column; overflow: hidden; background: #bfdbff; }

/* title bar */
.titlebar { height: 24px; flex: none; background: #69e8ee; display: flex; align-items: flex-start; justify-content: center; position: relative; border-bottom: 1px solid #5fc9dd; }
.title-text { font-family: "Open Sans", sans-serif; font-size: 14.6px; line-height: 26px; color: #28484c; white-space: pre; margin-left: 2px; }
.winctl { position: absolute; right: 2px; top: 0; display: flex; align-items: flex-start; }
.ctl-min { width: 8px; height: 2px; background: #102030; margin: 11px 18px 0 0; }
.ctl-res { margin: 3px 7px 0 0; }
.ctl-close { width: 46px; height: 19px; background: #c75050; display: flex; align-items: center; justify-content: center; }

.orb { position: absolute; left: 3px; top: 4px; z-index: 5; }

/* tabs */
.tabs { height: 24px; flex: none; display: flex; align-items: flex-end; padding-left: 47px; background: #bfdbff; position: relative; }
.tab { height: 23px; padding: 0 14.5px; line-height: 25px; font-size: 10.9px; color: #15428b; white-space: nowrap; }
.tab.active { width: 67px; padding: 0; text-align: center; border: 1px solid #a9c6e8; border-bottom: 0; border-radius: 3px 3px 0 0; background: linear-gradient(#f3f8fe, #dce8f6); color: #15428b; line-height: 23px; }
.mdi { position: absolute; right: 6px; top: 3px; display: flex; align-items: center; gap: 14px; }
.mdi-help { margin-right: -4px; }
.mdi-min { width: 7px; height: 2px; background: #6c7f96; margin-top: 7px; }
.mdi-res { margin-top: -2px; }
.qmark { font-size: 11px; font-weight: 700; fill: #fff; text-anchor: middle; }

/* ribbon */
.ribbon { height: 89px; flex: none; display: flex; gap: 3px; padding: 2px 0 2px 3px; background: linear-gradient(#d6e3f3, #c8daf0 60%, #dff3fd); border-bottom: 1px solid #8fb0d8; border-radius: 3px; }
.group { height: 85px; display: flex; flex-direction: column; border: 1px solid #a7c3e4; border-radius: 3px; background: linear-gradient(#d5e1f0, #c9daee 60%, #c6d9ef); }
.g1 { width: 101px; } .g2 { width: 196px; } .g3 { width: 165px; } .g4 { width: 136px; } .g5 { width: 249px; } .g6 { width: 91px; } .g7 { width: 174px; }
.g-body { flex: 1; min-height: 0; display: flex; }
.g-label { height: 16px; flex: none; position: relative; text-align: center; font-size: 11.5px; line-height: 17px; color: #3f6aa5; background: #c1d8f1; letter-spacing: .2px; white-space: nowrap; }
.g-label.wl { padding-right: 18px; }
.launch { position: absolute; right: 6px; top: 3px; width: 9px; height: 9px; }
.b svg { overflow: visible; }

.g1 .g-body { padding-left: 4px; }
.paste { width: 66px; padding-top: 5px; display: flex; flex-direction: column; align-items: center; }
.paste-label { font-size: 11.2px; line-height: 14px; margin-top: 4px; color: #15428b; }
.caret-b { width: 7px; height: 4px; margin-top: 6px; color: #567db1; }
.clip-tools { display: flex; flex-direction: column; align-items: center; gap: 7px; padding-top: 3px; width: 18px; margin-left: -4px; }

.tools { flex-direction: column; gap: 7px; padding: 9px 3px 0; }
.row { display: flex; gap: 4px; height: 21px; align-items: stretch; }
.combo { display: flex; align-items: center; justify-content: space-between; height: 21px; background: #f4f8fd; border: 1px solid #abc1de; font-size: 11px; color: #111; padding: 0 3px 0 2px; font-family: "Noto Sans", sans-serif; }
.font-combo { width: 97px; margin-right: -4px; white-space: nowrap; font-size: 10.6px; }
.size-combo { width: 43px; border-left: 0; padding-right: 5px; margin-right: 0; }
.caret-s { width: 7px; height: 4px; color: #5b7fa9; }
.num-combo { width: 127px; background: #e9edf2; color: #9a9a9a; border-color: #c5d0de; padding-left: 3px; }
.num-combo .caret-s { color: #b4bdc9; }
.bbox { display: flex; border: 1px solid #8ea9cd; border-radius: 3px; background: linear-gradient(#dbe6f4, #c5d6ea 50%, #bdd0e7); overflow: hidden; }
.b { display: flex; align-items: center; justify-content: center; gap: 3px; border-right: 1px solid #aec3dd; position: relative; }
.b:last-child { border-right: 0; }
.w21 { width: 21px; } .w22 { width: 22px; } .w23 { width: 23px; } .w24 { width: 24px; } .w31 { width: 31px; } .w32 { width: 32px; } .w33 { width: 33px; }
.ic16 { width: 16px; height: 13px; }
.caret-g { width: 7px; height: 4px; color: #a9b6c6; }
.caret-g.blue { color: #4a74ac; }
.letter { font-family: "Liberation Serif", serif; color: #76879c; font-weight: 700; }
.letter.big { font-size: 18px; }
.letter.small { font-size: 14px; }
.up { position: absolute; top: 2px; right: 2px; border: 3px solid transparent; border-bottom-color: #6e8299; border-top: 0; }
.glyph { font-family: "Liberation Serif", serif; font-weight: 700; font-size: 14px; color: #6a7a8e; }
.italic { font-style: italic; }
.under { text-decoration: underline; }
.letter-a { font-family: "Liberation Sans", sans-serif; font-size: 15px; font-weight: 700; color: #76879c; }
.vsep { width: 1px; background: #a9c0dc; margin: -2px 6px 0 14px; height: 28px; }
.wrap { margin: 2px 0 0 0; }
.merge { margin: 2px 0 0 12px; }
.orient { font-size: 8px; fill: #6a7a8e; font-weight: 700; }
.pct { font-size: 12px; color: #75879d; }
.thou { font-size: 10px; color: #75879d; }
.dec { font-size: 7.5px; font-weight: 700; fill: #76879c; }

.g5-body { padding: 0 0 0 5px; gap: 3px; }
.lg { display: flex; flex-direction: column; align-items: center; padding-top: 5px; line-height: 13px; font-size: 11.1px; color: #7e8b9b; white-space: nowrap; letter-spacing: .1px; }
.lg svg:first-child { margin-bottom: 4px; }
.lg span { display: flex; align-items: center; gap: 3px; }
.lg.on { color: #15428b; }
.lg-cond { width: 104px; } .lg-table { width: 88px; } .lg-style { width: 44px; }
.caret-t { width: 6px; height: 3px; color: #a9b6c6; display: inline-block; }
.caret-t.blue { color: #3f6ca8; }

.g6-body { flex-direction: column; padding: 0 0 0 5px; }
.cellrow { height: 22px; display: flex; align-items: center; gap: 1px; font-size: 11.2px; white-space: nowrap; color: #15428b; }
.cellrow.off { color: #7e8b9b; }
.ic20 { width: 20px; height: 18px; }
.cellrow .caret-t { margin-left: 4px; }

.g7-body { padding-left: 7px; }
.edit-col { width: 30px; display: flex; flex-direction: column; padding-top: 2px; }
.edit-i { height: 22px; display: flex; align-items: center; gap: 5px; }
.sigma { font-family: "Liberation Serif", serif; font-size: 15px; font-weight: 700; color: #4b6c95; width: 13px; line-height: 18px; }
.lg-sort { width: 67px; margin-left: 0; } .lg-find { width: 60px; margin-left: 7px; }
.sort-a { font-family: "Liberation Serif", serif; font-size: 17px; fill: #9da6b1; font-weight: 700; }

.strip { height: 3px; flex: none; background: #c0d8f5; }

/* quick access */
.qat { height: 25px; flex: none; display: flex; align-items: center; padding-left: 5px; gap: 7px; background: linear-gradient(#c4d7ef, #a7c2e8); border-top: 1px solid #a2bfe2; border-bottom: 1px solid #7ea0c9; border-radius: 3px; }
.q-undo { margin-left: 1px; }
.caret-q { width: 6px; height: 3px; color: #5a7dab; margin-left: -3px; }
.caret-q.gray { color: #9eb0c6; }
.q-redo { margin-left: 1px; }
.q-sep { width: 1px; height: 17px; background: #8ea9cc; margin: 0 0 0 -1px; }
.q-more { margin-left: 4px; }

/* formula bar */
.fbar { height: 23px; flex: none; display: flex; align-items: stretch; background: #fff; border-bottom: 1px solid #7ea0c9; }
.namebox { width: 148px; display: flex; align-items: center; justify-content: flex-end; font-size: 12px; color: #111; padding-right: 2px; position: relative; }
.namebox span { position: absolute; left: 53px; top: 3px; }
.caret-n { width: 7px; height: 4px; color: #111; }
.fx-pill { width: 85px; height: 21px; border-radius: 10px 0 0 10px; background: linear-gradient(#e6eef9, #c9d9ef); border: 1px solid #90a9c8; border-right: 1px solid #a8bcd6; display: flex; align-items: center; justify-content: space-between; padding: 0 7px 0 6px; }
.knob { width: 7px; height: 7px; border-radius: 50%; background: #a7aeb7; }
.fx { font-family: "Liberation Serif", serif; font-style: italic; font-weight: 700; font-size: 13px; color: #5d6a7a; }
.fvalue { flex: 1; padding: 3px 0 0 7px; font-size: 12.4px; color: #111; line-height: 17px; }
.fexpand { width: 15px; height: 21px; margin-right: 1px; background: linear-gradient(#d7e4f4, #b7cce6); border: 1px solid #7f9dc3; display: flex; align-items: center; justify-content: center; }
.band { height: 4px; flex: none; background: #c9dcf3; border-bottom: 1px solid #7ea0c9; }

/* workspace */
.workspace { height: 530px; flex: none; display: flex; justify-content: space-between; background: linear-gradient(#a3c0e8, #9ab9e3 30%, #6f97cc 68%, #5a85bf 80%, #618bc6); }
.sheet { width: 918px; background: #fff; box-shadow: 3px 0 10px rgba(30, 50, 90, .55); display: flex; flex-direction: column; overflow: hidden; }
.colhead { height: 20px; flex: none; display: flex; }
.corner { width: 26px; flex: none; background: linear-gradient(135deg, #d7e3f3 50%, #a9bdd6 50%); border-right: 1px solid #9eb6ce; border-bottom: 1px solid #9eb6ce; }
.ch { width: 32px; flex: none; text-align: center; line-height: 21px; font-size: 12px; color: #37475c; background: linear-gradient(#f6f9fc, #d9e3f0); border-right: 1px solid #b3c3d8; border-bottom: 1px solid #9eb6ce; }
.ch.a { width: 73px; } .ch.b { width: 51px; }
.ch.sel { background: linear-gradient(#f9dd9b, #f7bd6d); border-bottom: 1px solid #f29536; border-right-color: #f2a54a; color: #4a3a20; }
.sheet-body { flex: 1; min-height: 0; display: flex; overflow: hidden; }
.rowhead { width: 26px; flex: none; display: flex; flex-direction: column; background: #e4ecf7; }
.rh { height: 20px; flex: none; text-align: center; font-size: 12px; line-height: 21px; color: #37475c; border-bottom: 1px solid #9eb6ce; border-right: 1px solid #9eb6ce; }
.rh.h17 { height: 17px; line-height: 17px; }
.rh.h21 { height: 21px; line-height: 21px; }
.cells { flex: 1; min-width: 0; display: flex; flex-direction: column; position: relative; }
.trow { display: grid; grid-template-columns: 73px 51px repeat(7, 32px) 1fr; height: 17px; flex: none; }
.c { border-right: 1px solid #000; border-bottom: 1px solid #000; font-family: "Liberation Serif", serif; font-size: 14px; line-height: 15px; color: #000; overflow: hidden; white-space: nowrap; }
.c.tk { border-right-width: 2px; }
.trow .c:first-child { border-right-width: 2px; }
.c.rest { border-right: 0; }
.date { text-align: right; padding-right: 2px; }
.thickb .c { border-bottom-width: 2px; line-height: 15px; }
.total { height: 21px; }
.total .c { border-bottom-width: 2px; font-weight: 700; line-height: 20px; font-size: 16px; }
.num { text-align: right; padding-right: 2px; }
.lbl { padding-left: 2px; }
.green { background: #00b050; }
.gridbg {
  padding-left: 123px;
  background-image: linear-gradient(90deg, #d0d7e5 1px, transparent 1px), linear-gradient(#d0d7e5, #d0d7e5), linear-gradient(#d0d7e5, #d0d7e5), linear-gradient(0deg, #d0d7e5 1px, transparent 1px);
  background-size: 32px 100%, 1px 100%, 1px 100%, 100% 20px;
  background-position: 0 0, 72px 0, 123px 0, 0 0;
  background-repeat: repeat-x, no-repeat, no-repeat, repeat-y;
  background-origin: content-box, border-box, border-box, border-box;
  background-clip: content-box, border-box, border-box, border-box;
}
.blank { height: 60px; flex: none; }
.divider { height: 2px; flex: none; background: #000; margin-top: -1px; }
.below { flex: 1; position: relative; }
.chart { margin: 0; position: absolute; background: #fff; border: 1px solid #868686; overflow: hidden; }
.chart1 { left: 3px; top: 8px; width: 874px; height: 312px; }
.chart2 { left: 8px; top: 331px; width: 872px; height: 60px; }
.c-title { font-family: "Open Sans", sans-serif; font-weight: 700; font-size: 21px; fill: #000; }
.c-ytick text, .c-data text, .c-xtick text { font-family: "Noto Sans", sans-serif; font-size: 11.6px; fill: #000; }
.bf { fill: #4f81bd; }
.bs { fill: #385d8a; }
.bt { fill: #3f6797; }

/* vertical scrollbar */
.vscroll { width: 15px; flex: none; display: flex; flex-direction: column; align-items: center; background: rgba(168, 192, 224, .35); }
.vs-split { width: 13px; height: 7px; margin-top: 1px; background: #fff; border: 1px solid #8fa9cb; }
.vs-arrow { margin: 6px 0 5px; }
.vs-thumb { width: 14px; flex: 1; border: 1px solid #8ea7c7; border-radius: 2px; background: linear-gradient(90deg, #eaf0f8, #cbd7e6 50%, #b9c8dc); }
.vs-arrow.dn { margin: 8px 0 7px; }

/* sheet tabs */
.sheettabs { height: 16px; flex: none; display: flex; align-items: stretch; background: linear-gradient(#d9e7fa, #b4cdf0); border-top: 1px solid #7a9cc8; border-bottom: 1px solid #7a9cc8; font-size: 11.8px; color: #15428b; }
.navbtns { width: 62px; flex: none; display: flex; align-items: center; gap: 8px; padding: 0 0 0 6px; border-right: 1px solid #9db7d9; }
.st { width: 32px; flex: none; text-align: center; line-height: 15px; position: relative; padding-left: 5px; }
.st::before { content: ""; position: absolute; left: -3px; bottom: 0; width: 16px; height: 14px; background: linear-gradient(to top right, transparent 47%, #7d9ac2 47%, #7d9ac2 53%, transparent 53%); }
.st.s { width: 24px; }
.st.wide { width: 156px; padding-left: 2px; }
.st.yellow { width: 14px; background: linear-gradient(#fff66a, #ffee10); clip-path: polygon(0 0, 100% 0, 55% 100%, 0 100%); }
.st.yellow::before { display: none; }
.st.current { width: 56px; background: #fff; font-weight: 700; font-size: 12.5px; padding-left: 0; }
.st.current::before { display: none; }
.st.newtab { width: 34px; padding: 1px 0 0 14px; }
.hsplit { width: 27px; flex: none; display: flex; align-items: center; justify-content: space-between; }
.hs-bar { width: 5px; height: 12px; background: #eef4fb; border: 1px solid #8ea9cc; }

/* status bar */
.status { height: 22px; flex: none; display: flex; align-items: center; background: linear-gradient(#dae7fb, #c4d9f7 40%, #adc8f0); border-bottom: 1px solid #78a0b8; font-size: 12px; color: #17375e; }
.ready { width: 53px; height: 100%; padding-left: 7px; line-height: 20px; border-right: 1px solid #a5bfe4; }
.views { margin-left: 987px; height: 18px; width: 56px; display: flex; border: 1px solid #8ea9cc; border-radius: 3px; background: linear-gradient(#dbe7f8, #b7cef0); box-shadow: -3px 0 0 -1px #bcd2f0; }
.view { flex: 1; display: flex; align-items: center; justify-content: center; }
.view.on { background: linear-gradient(#fde6a8, #f9c466); }
.zoompct { margin-left: 9px; width: 37px; font-size: 11.5px; color: #15428b; }
.zbtn { width: 17px; height: 17px; flex: none; border-radius: 50%; position: relative; background: linear-gradient(#f2f6fb, #aebcd0); border: 1px solid #6f8cb0; }
.zbtn .minus { position: absolute; left: 3px; top: 6px; width: 9px; height: 3px; background: #6c7f96; }
.zbtn .plus { position: absolute; left: 6px; top: 3px; width: 3px; height: 9px; background: #6c7f96; }
.zslider { width: 100px; flex: none; height: 14px; padding-right: 2px; display: flex; align-items: center; justify-content: center; position: relative; }
.zslider::before { content: ""; position: absolute; left: 0; right: 0; top: 6px; height: 1px; background: #e9f1fc; }
.zthumb { position: relative; }

/* taskbar */
.taskbar { height: 40px; flex: none; position: relative; display: flex; align-items: flex-start; overflow: hidden; }
.wall { position: absolute; left: 0; top: 0; }
.win-logo, .tb-pdf, .tb-aimp, .tb-rar, .tb-paint, .tb-btn, .tray { position: relative; }
.win-logo { margin: 7px 0 0 11px; }
.tb-pdf { margin: 5px 0 0 29px; }
.tb-aimp { margin: 5px 0 0 33px; }
.tb-rar { margin: 9px 0 0 30px; }
.tb-paint { margin: 6px 0 0 31px; }
.tb-btn { width: 59px; height: 40px; margin-left: 3px; padding-top: 6px; display: flex; justify-content: center; background: rgba(255, 255, 255, .16); border: 1px solid rgba(255, 255, 255, .35); }
.tb-btn.first { margin-left: 19px; }
.tb-btn.active { background: rgba(255, 255, 255, .33); border-color: rgba(255, 255, 255, .85); }
.word-w { font-family: "Liberation Serif", serif; font-weight: 700; font-size: 12px; fill: #2b4fa6; }
.tray { margin-left: auto; display: flex; align-items: center; height: 40px; color: #fff; padding-top: 4px; }
.t-up { margin-right: 11px; }
.t-net { margin-right: 8px; }
.t-vol { margin-right: 10px; }
.t-pow { margin-right: 15px; }
.t-lang { font-size: 12px; width: 33px; }
.clock { width: 81px; padding-right: 16px; display: flex; flex-direction: column; align-items: center; font-size: 12px; line-height: 19px; margin-top: -4px; }
```
